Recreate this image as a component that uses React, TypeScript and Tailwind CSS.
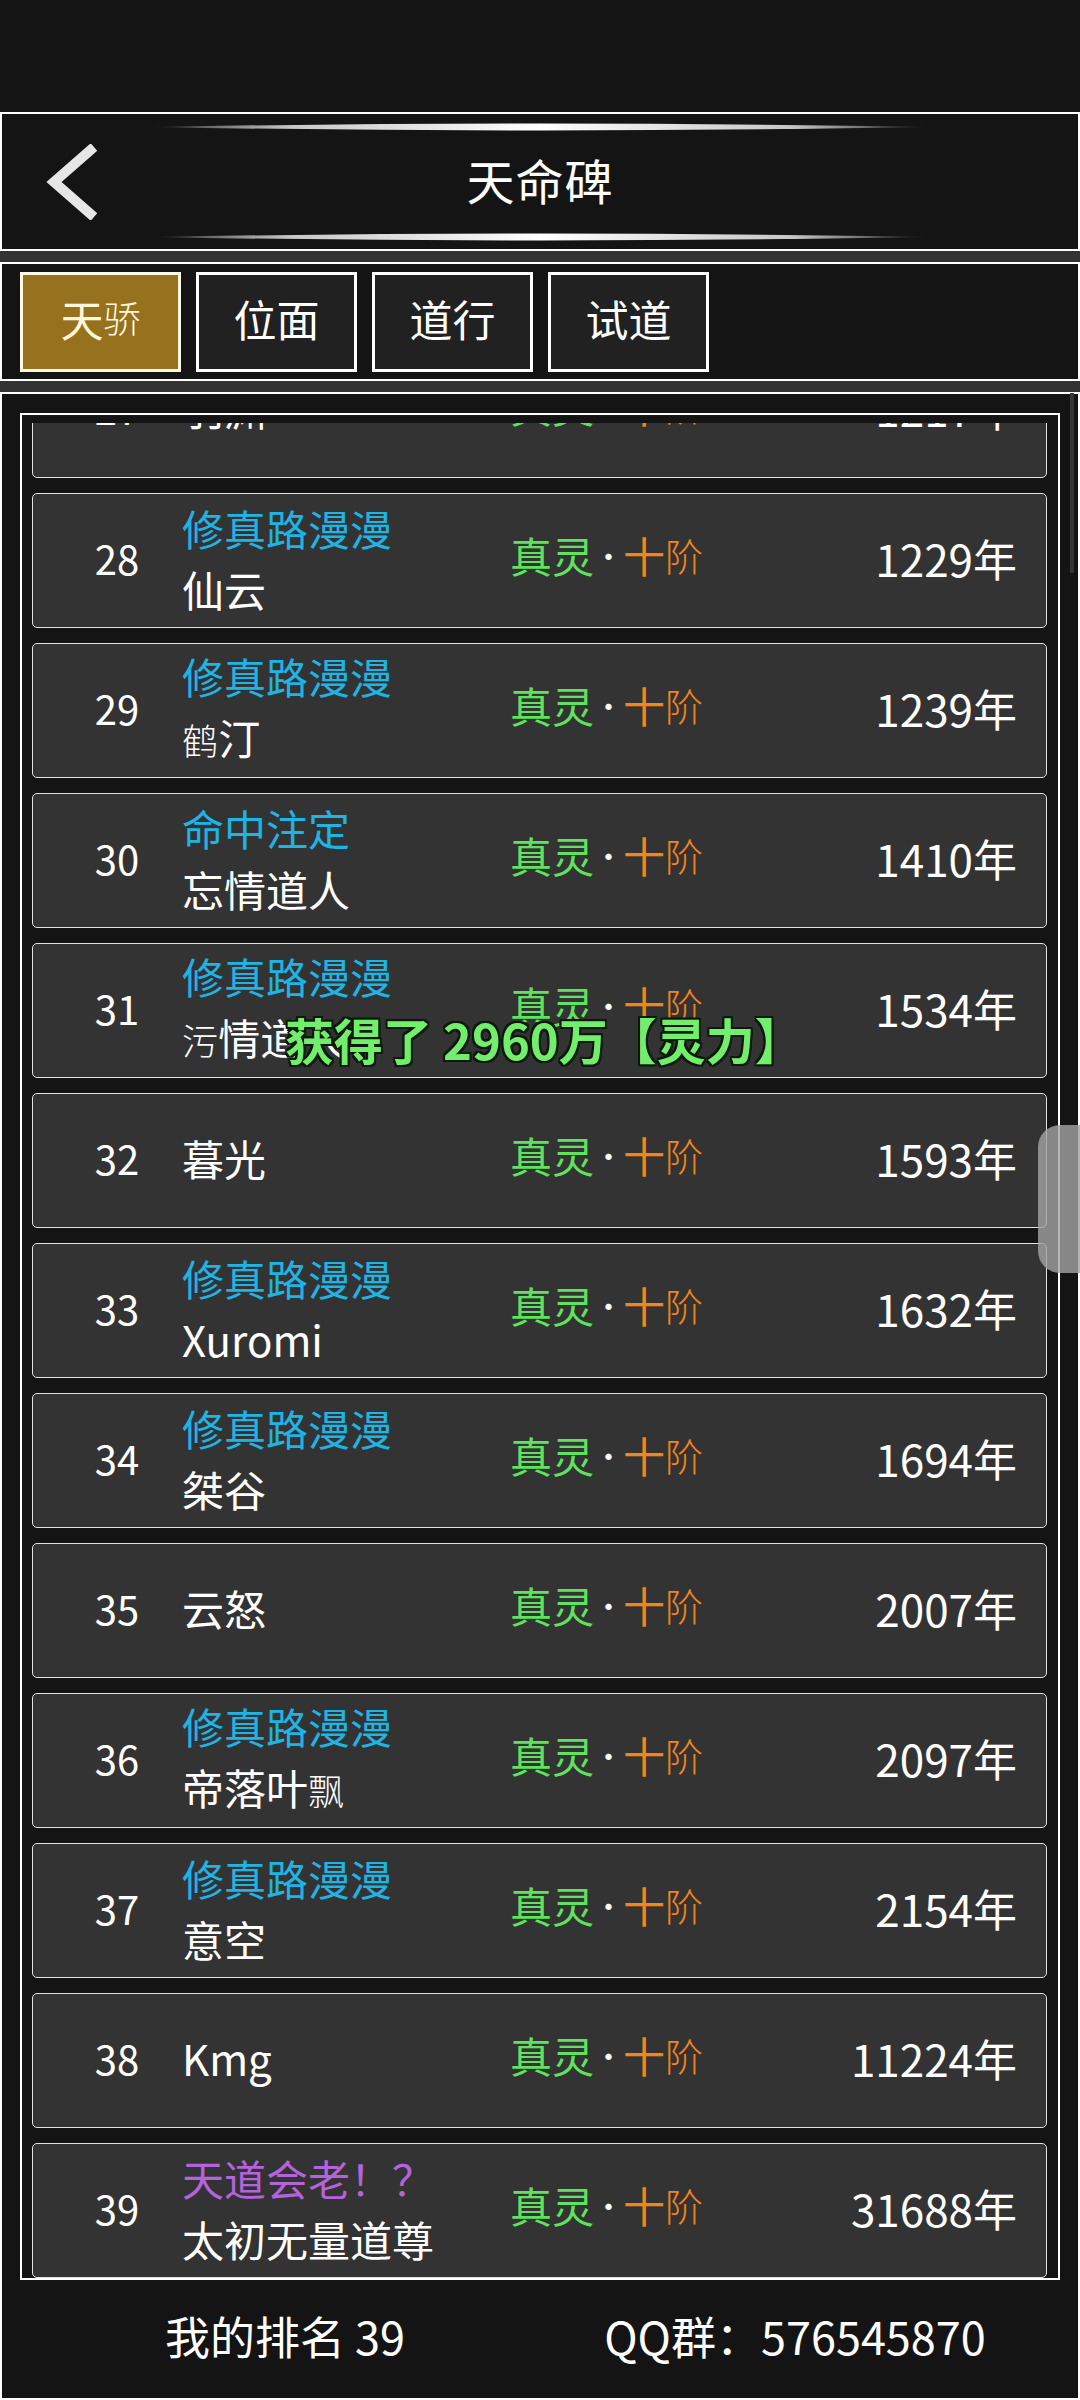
import React from "react";

type Row = {
  rank: number;
  guild?: string;
  guildColor?: string;
  name: string;
  years: string;
};

const rows: Row[] = [
  { rank: 27, name: "羽渊", years: "1217年" },
  { rank: 28, guild: "修真路漫漫", name: "仙云", years: "1229年" },
  { rank: 29, guild: "修真路漫漫", name: "鹤汀", years: "1239年" },
  { rank: 30, guild: "命中注定", name: "忘情道人", years: "1410年" },
  { rank: 31, guild: "修真路漫漫", name: "污情道人", years: "1534年" },
  { rank: 32, name: "暮光", years: "1593年" },
  { rank: 33, guild: "修真路漫漫", name: "Xuromi", years: "1632年" },
  { rank: 34, guild: "修真路漫漫", name: "桀谷", years: "1694年" },
  { rank: 35, name: "云怒", years: "2007年" },
  { rank: 36, guild: "修真路漫漫", name: "帝落叶飘", years: "2097年" },
  { rank: 37, guild: "修真路漫漫", name: "意空", years: "2154年" },
  { rank: 38, name: "Kmg", years: "11224年" },
  { rank: 39, guild: "天道会老！？", guildColor: "purple", name: "太初无量道尊", years: "31688年" },
];

// glyphs the game font lacks render thinner in the fallback face
const thinChars = "骄鹤污飘阶";

const Txt = ({ text }: { text: string }) => (
  <>
    {text.split("").map((c, i) =>
      thinChars.includes(c) ? (
        <span key={i} className="font-light text-[0.86em]">
          {c}
        </span>
      ) : (
        <span key={i}>{c}</span>
      )
    )}
  </>
);

const GlowLine = () => (
  <svg width="780" height="8" viewBox="0 0 780 8" className="block">
    <defs>
      <linearGradient id="gl" x1="0" x2="1" y1="0" y2="0">
        <stop offset="0" stopColor="#ffffff" stopOpacity="0" />
        <stop offset="0.18" stopColor="#dcdcdc" stopOpacity="0.9" />
        <stop offset="0.5" stopColor="#ffffff" />
        <stop offset="0.82" stopColor="#dcdcdc" stopOpacity="0.9" />
        <stop offset="1" stopColor="#ffffff" stopOpacity="0" />
      </linearGradient>
    </defs>
    <path d="M0 4 Q390 -3 780 4 Q390 11 0 4 Z" fill="url(#gl)" />
  </svg>
);

const RankRow = ({ row }: { row: Row }) => (
  <div className="h-[135px] mb-[15px] shrink-0 flex items-center rounded-[5px] border border-[#e2e2e2] bg-[#333333]">
    <div className="ml-[31px] w-[106px] pb-[6px] text-center text-[40px] text-white">{row.rank}</div>
    <div className="ml-[12px] w-[328px] pb-[6px] flex flex-col text-[42px] leading-[61px]">
      {row.guild && (
        <div className={row.guildColor === "purple" ? "text-[#b463dc]" : "text-[#1eb4e4]"}>
          {row.guild}
        </div>
      )}
      <div className="text-white">
        <Txt text={row.name} />
      </div>
    </div>
    <div className="flex-1 flex items-center pb-[12px] text-[42px] leading-none">
      <span className="text-[#5fe35f]">真灵</span>
      <span className="w-[29px] flex justify-center text-white text-[30px]">·</span>
      <span className="text-[#f2851b]">十</span>
      <span className="text-[#f2851b] font-light text-[38px]">阶</span>
    </div>
    <div className="pr-[29px] pb-[6px] text-[44px] text-white">{row.years}</div>
  </div>
);

const tabs = ["天骄", "位面", "道行", "试道"];

export default function App() {
  return (
    <div className="relative w-[1080px] h-[2400px] overflow-hidden bg-[#141414] font-['Noto_Sans_CJK_SC','Noto_Sans',sans-serif]">
      {/* status bar area */}
      <div className="h-[112px]" />

      {/* title bar */}
      <div className="h-[139px] border-2 border-white flex flex-col items-center">
        <div className="mt-[9px]">
          <GlowLine />
        </div>
        <div className="flex-1 w-full grid grid-cols-[1fr_auto_1fr] items-center">
          <div className="pl-[43px]">
            <svg width="52" height="76" viewBox="0 0 52 76">
              <polyline points="49,3 9,38 49,73" fill="none" stroke="#e6e6e6" strokeWidth="10" />
            </svg>
          </div>
          <div className="pb-[6px] text-[48px] text-white tracking-[1px]">天命碑</div>
          <div />
        </div>
        <div className="mb-[8px]">
          <GlowLine />
        </div>
      </div>

      <div className="h-[11px] bg-[#333333]" />

      {/* tabs */}
      <div className="h-[119px] border-2 border-white pl-[18px] pt-[8px] flex gap-[15px]">
        {tabs.map((t, i) => (
          <div
            key={t}
            className={
              i === 0
                ? "w-[161px] h-[100px] pb-[8px] border-[3px] border-[#fff9e3] bg-[#96721f] flex items-center justify-center text-[43px] text-[#fff6dc]"
                : "w-[161px] h-[100px] pb-[8px] border-[3px] border-white bg-[#212121] flex items-center justify-center text-[43px] text-white"
            }
          >
            <Txt text={t} />
          </div>
        ))}
      </div>

      <div className="h-[11px] bg-[#333333]" />

      {/* ranking list */}
      <div className="h-[2008px] border-2 border-white pt-[19px] px-[18px] flex flex-col">
        <div className="h-[1867px] border-2 border-white pt-[8px] pl-[10px] pr-[11px]">
          <div className="h-[1855px] overflow-hidden">
            <div className="-mt-[80px] flex flex-col">
              {rows.map((r) => (
                <RankRow key={r.rank} row={r} />
              ))}
            </div>
          </div>
        </div>
        <div className="flex-1 pb-[6px] grid grid-cols-[540px_1fr] items-center text-[45px] text-white">
          <div className="text-center pr-[10px]">我的排名 39</div>
          <div className="text-center pr-[30px]">QQ群：576545870</div>
        </div>
      </div>

      {/* scrollbar */}
      <div className="absolute right-[6px] top-[393px] w-[4px] h-[180px] bg-[#363636]" />

      {/* floating side handle */}
      <div className="absolute right-0 top-[1125px] w-[42px] h-[148px] rounded-l-[22px] bg-[#a4a4a4]/80" />

      {/* reward toast */}
      <div className="absolute left-[285px] top-[1014px] text-[49px] leading-none font-bold text-[#72ee6c] whitespace-nowrap [text-shadow:2px_2px_0_#0b1a0b,-2px_-2px_0_#0b1a0b,2px_-2px_0_#0b1a0b,-2px_2px_0_#0b1a0b,0_2px_0_#0b1a0b,0_-2px_0_#0b1a0b,2px_0_0_#0b1a0b,-2px_0_0_#0b1a0b]">
        获得了 2960万【灵力】
      </div>
    </div>
  );
}
